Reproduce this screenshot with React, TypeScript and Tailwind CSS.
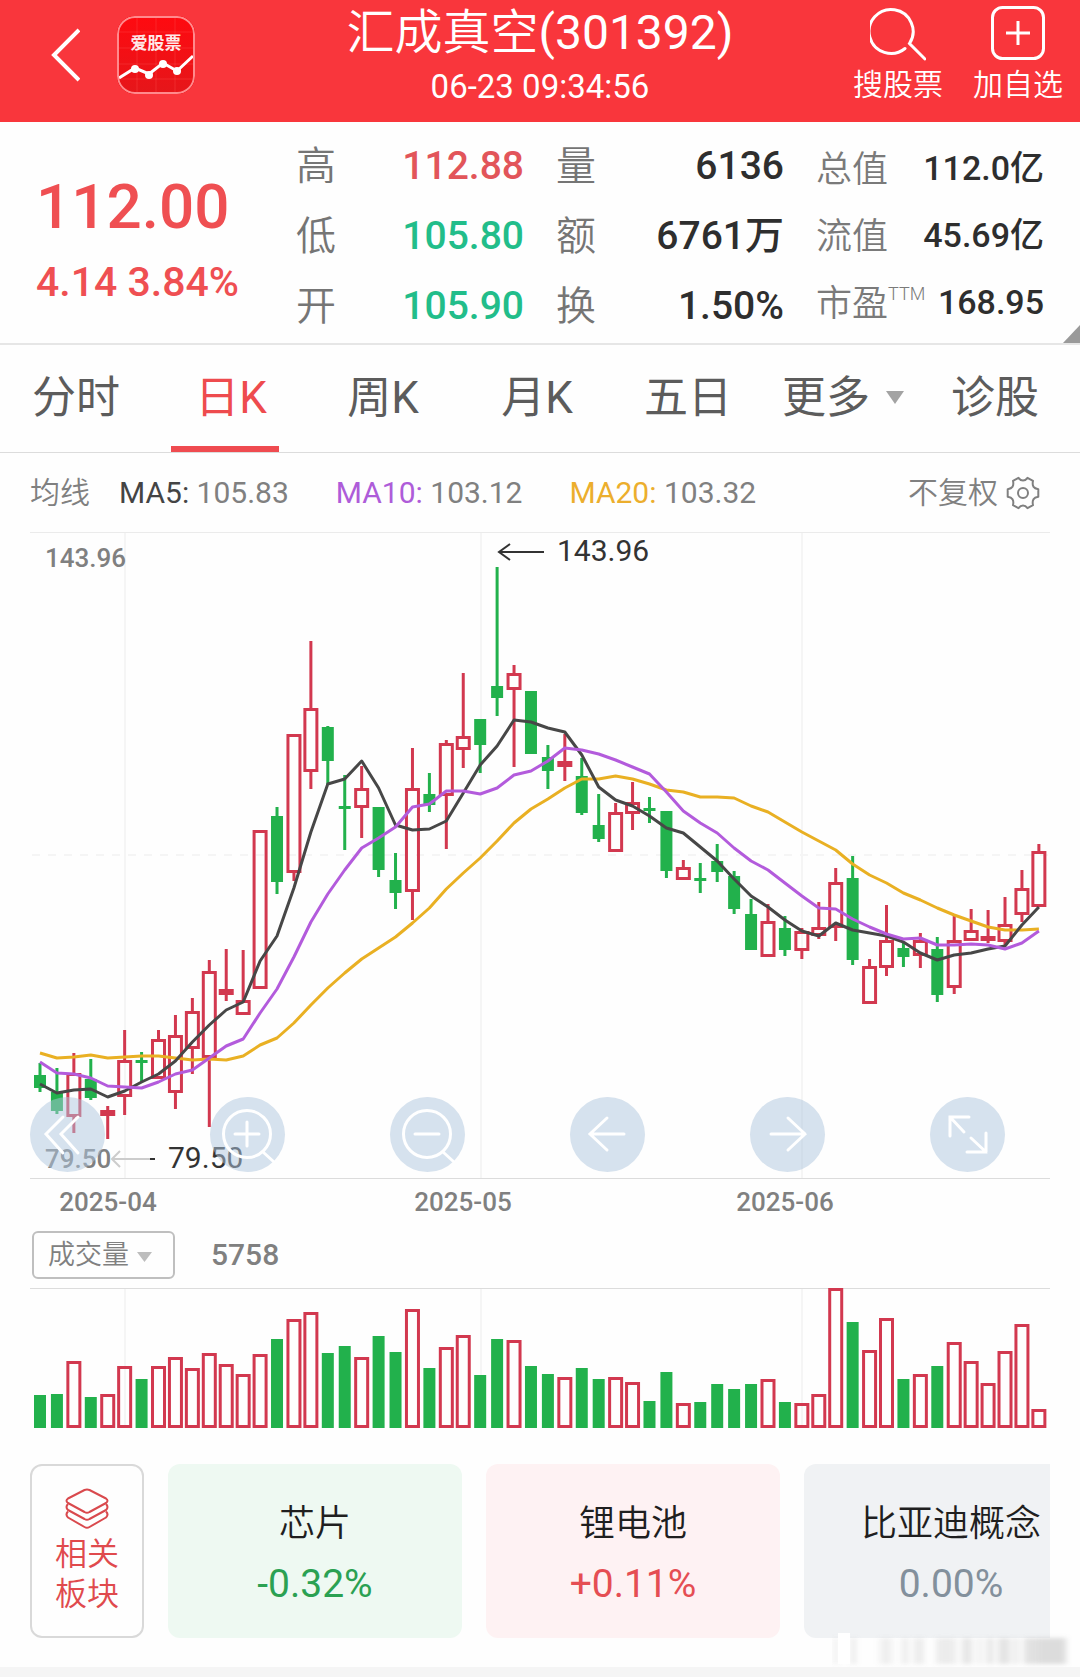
import React, { useState } from "react";

type Candle = {
  up: boolean;
  high: number;
  low: number;
  top: number;
  bottom: number;
  volume: number;
};

const STEP = 16.93;
const xAt = (i: number) => 40 + STEP * i;

const rows: [string, number, number, number, number, number][] = [
  ["g", 1063, 1092, 1075, 1088, 1395],
  ["g", 1068, 1114, 1092, 1111, 1394],
  ["r", 1053, 1133, 1073, 1117, 1361],
  ["g", 1059, 1100, 1079, 1098, 1397],
  ["r", 1106, 1139, 1110, 1116, 1394],
  ["r", 1030, 1115, 1060, 1097, 1366],
  ["g", 1052, 1081, 1060, 1063, 1379],
  ["r", 1030, 1079, 1039, 1079, 1366],
  ["r", 1015, 1109, 1035, 1093, 1357],
  ["r", 998, 1074, 1011, 1049, 1368],
  ["r", 960, 1127, 971, 1058, 1353],
  ["r", 949, 1001, 989, 995, 1364],
  ["r", 950, 1015, 1000, 1015, 1374],
  ["r", 830, 989, 830, 989, 1354],
  ["g", 807, 894, 816, 882, 1339],
  ["r", 734, 881, 734, 873, 1319],
  ["r", 641, 789, 708, 772, 1312],
  ["g", 726, 785, 727, 761, 1353],
  ["g", 775, 850, 806, 809, 1346],
  ["r", 766, 838, 788, 808, 1357],
  ["g", 807, 877, 807, 870, 1336],
  ["g", 853, 909, 880, 893, 1352],
  ["r", 748, 920, 788, 892, 1309],
  ["g", 773, 812, 794, 805, 1368],
  ["r", 740, 849, 743, 796, 1347],
  ["r", 673, 768, 736, 750, 1335],
  ["g", 719, 773, 719, 745, 1375],
  ["g", 567, 716, 686, 698, 1339],
  ["r", 665, 767, 673, 690, 1340],
  ["g", 691, 754, 691, 754, 1366],
  ["g", 745, 789, 757, 771, 1374],
  ["r", 734, 781, 761, 767, 1377],
  ["g", 758, 815, 776, 813, 1368],
  ["g", 794, 842, 825, 839, 1379],
  ["r", 803, 852, 812, 852, 1377],
  ["r", 782, 830, 802, 814, 1382],
  ["g", 797, 823, 808, 811, 1401],
  ["g", 811, 878, 811, 871, 1372],
  ["r", 860, 880, 867, 880, 1403],
  ["g", 863, 893, 878, 881, 1402],
  ["g", 844, 882, 861, 872, 1384],
  ["g", 871, 914, 876, 909, 1389],
  ["g", 899, 950, 914, 950, 1384],
  ["r", 904, 957, 921, 957, 1379],
  ["g", 916, 956, 928, 950, 1402],
  ["r", 928, 959, 931, 951, 1403],
  ["r", 902, 939, 927, 936, 1394],
  ["r", 868, 941, 882, 928, 1288],
  ["g", 856, 965, 878, 960, 1322],
  ["r", 959, 1004, 966, 1004, 1350],
  ["r", 905, 976, 940, 968, 1318],
  ["g", 943, 967, 948, 957, 1379],
  ["r", 933, 968, 940, 956, 1374],
  ["g", 937, 1002, 949, 995, 1366],
  ["r", 914, 994, 940, 988, 1342],
  ["r", 909, 941, 930, 941, 1361],
  ["r", 910, 943, 936, 941, 1383],
  ["r", 897, 945, 924, 942, 1351],
  ["r", 870, 922, 888, 915, 1324],
  ["r", 844, 907, 851, 907, 1409],
];

const candles: Candle[] = rows.map(([c, high, low, top, bottom, volume]) => ({
  up: c === "r",
  high,
  low,
  top,
  bottom,
  volume,
}));

const ma5 = [
  1084, 1093, 1090, 1089, 1097, 1091, 1082, 1074, 1061, 1042, 1025, 1010, 1002, 961, 936, 888, 832, 784, 779, 761,
  788, 825, 830, 829, 821, 793, 765, 746, 720, 722, 728, 732, 755, 787, 800, 806, 816, 828, 833, 847, 861, 879, 896,
  907, 920, 931, 936, 923, 930, 933, 936, 942, 953, 960, 955, 953, 949, 946, 925, 907,
];
const ma10 = [
  1062, 1073, 1074, 1078, 1086, 1087, 1088, 1082, 1074, 1070, 1058, 1046, 1039, 1013, 989, 957, 922, 894, 870, 848,
  838, 827, 807, 804, 791, 791, 794, 788, 775, 771, 761, 748, 750, 754, 760, 767, 774, 792, 811, 823, 833, 848, 861,
  870, 883, 896, 908, 909, 919, 927, 934, 939, 938, 945, 945, 944, 945, 949, 943, 931,
];
const ma20 = [
  1053, 1058, 1057, 1055, 1058, 1057, 1056, 1056, 1058, 1060, 1059, 1060, 1056, 1045, 1038, 1023, 1005, 988, 973, 959,
  948, 937, 923, 908, 889, 873, 858, 841, 823, 809, 799, 788, 779, 779, 776, 779, 784, 790, 792, 797, 797, 798, 806,
  812, 822, 832, 841, 850, 864, 875, 883, 893, 900, 908, 915, 921, 927, 930, 930, 929,
];

const toPoints = (values: number[]) => values.map((v, i) => `${xAt(i).toFixed(1)},${v}`).join(" ");

const RED = "#d2384f";
const GREEN = "#22b14c";
const GRID_X = [125, 481, 802];

function CandleShape({ c, i }: { c: Candle; i: number }) {
  const x = xAt(i);
  if (!c.up) {
    return (
      <g fill={GREEN}>
        <rect x={x - 1.5} y={c.high} width={3} height={c.low - c.high} />
        <rect x={x - 6} y={c.top} width={12} height={c.bottom - c.top} />
      </g>
    );
  }
  const h = c.bottom - c.top;
  return (
    <g fill={RED}>
      {c.high < c.top && <rect x={x - 1.5} y={c.high} width={3} height={c.top - c.high} />}
      {c.low > c.bottom && <rect x={x - 1.5} y={c.bottom} width={3} height={c.low - c.bottom} />}
      {h <= 6 ? (
        <rect x={x - 7.5} y={c.top} width={15} height={h} />
      ) : (
        <rect x={x - 6} y={c.top + 1.5} width={12} height={h - 3} fill="none" stroke={RED} strokeWidth={3} />
      )}
    </g>
  );
}

function PriceChart() {
  return (
    <svg viewBox="30 532 1020 688" className="block w-full" role="img" aria-label="日K线图">
      <g stroke="#f5f5f5" strokeWidth={2}>
        {GRID_X.map((x) => (
          <line key={x} x1={x} x2={x} y1={532} y2={1178} />
        ))}
        <line x1={32} x2={1050} y1={855} y2={855} strokeDasharray="8 8" />
      </g>
      <line x1={30} x2={1050} y1={532} y2={532} stroke="#ebebeb" strokeWidth={2} />
      <line x1={30} x2={1050} y1={1178.5} y2={1178.5} stroke="#dcdcdc" />
      {candles.map((c, i) => (
        <CandleShape key={i} c={c} i={i} />
      ))}
      <g fill="none" strokeWidth={3} strokeLinejoin="round">
        <polyline points={toPoints(ma20)} stroke="#e9b023" />
        <polyline points={toPoints(ma5)} stroke="#474747" />
        <polyline points={toPoints(ma10)} stroke="#b35bdc" />
      </g>
      <g fontSize={26} fontWeight={500} fill="#808080">
        <text x={45} y={567}>143.96</text>
        <text x={45} y={1168}>79.50</text>
        <g textAnchor="middle">
          <text x={108} y={1211}>2025-04</text>
          <text x={463} y={1211}>2025-05</text>
          <text x={785} y={1211}>2025-06</text>
        </g>
      </g>
      <g fontSize={30} fill="#333333">
        <text x={557} y={561}>143.96</text>
        <text x={168} y={1168}>79.50</text>
      </g>
      <path d="M544 552H499M510 544L499 552L510 560" fill="none" stroke="#333333" strokeWidth={2} />
      <path d="M150 1159H112M120 1151L112 1159L120 1167" fill="none" stroke="#cccccc" strokeWidth={2} />
      <path d="M150 1159H155" stroke="#333333" strokeWidth={2} />
    </svg>
  );
}

function VolumeChart() {
  return (
    <svg viewBox="30 1288 1020 140" className="block w-full" role="img" aria-label="成交量">
      {GRID_X.map((x) => (
        <line key={x} x1={x} x2={x} y1={1289} y2={1426} stroke="#f5f5f5" strokeWidth={2} />
      ))}
      <line x1={30} x2={1050} y1={1288.5} y2={1288.5} stroke="#dcdcdc" />
      {candles.map((c, i) =>
        c.up ? (
          <rect
            key={i}
            x={xAt(i) - 6}
            y={c.volume + 1.5}
            width={12}
            height={1425 - c.volume}
            fill="none"
            stroke={RED}
            strokeWidth={3}
          />
        ) : (
          <rect key={i} x={xAt(i) - 6} y={c.volume} width={12} height={1428 - c.volume} fill={GREEN} />
        )
      )}
    </svg>
  );
}

const tools: { label: string; d: string; circle?: boolean }[] = [
  { label: "最早", d: "M33 20L16 37L33 56M48 20L31 37L48 56" },
  { label: "放大", d: "M25 37H49M37 25V49M53 55L64 65", circle: true },
  { label: "缩小", d: "M25 37H49M53 55L64 65", circle: true },
  { label: "左移", d: "M54 37H20M37 21L20 37L37 53" },
  { label: "右移", d: "M21 37H55M38 21L55 37L38 53" },
  { label: "全屏", d: "M20 39V20H39M20 20L34 35M56 36V55H37M56 55L41 41" },
];

function ChartTools() {
  return (
    <div className="absolute inset-x-0 bottom-12 flex justify-between pr-[45px]">
      {tools.map((t) => (
        <button key={t.label} type="button" aria-label={t.label} className="size-[75px] rounded-full bg-[#adc6dd]/50">
          <svg viewBox="0 0 75 75" className="size-full" fill="none" stroke="#ffffff" strokeWidth={3} strokeLinecap="round">
            {t.circle && <circle cx={37} cy={37} r={23.5} />}
            <path d={t.d} />
          </svg>
        </button>
      ))}
    </div>
  );
}

function Header() {
  return (
    <header className="grid h-[122px] grid-cols-[1fr_auto_1fr] bg-[#f9363c] text-white">
      <div className="flex items-start gap-[37px] pt-4 pl-[50px]">
        <button type="button" aria-label="返回" className="flex h-[78px] w-[30px] items-center">
          <svg viewBox="0 0 30 56" className="h-14 w-[30px]" fill="none" stroke="#ffffff" strokeWidth={4}>
            <path d="M29 3L4 28L29 53" />
          </svg>
        </button>
        <a href="#home" aria-label="爱股票" className="relative block size-[78px] overflow-hidden rounded-[18px] bg-[#f0090f]">
          <svg viewBox="0 0 78 78" className="size-full" fill="none">
            <defs>
              <linearGradient id="logo" x1="0" x2="0" y1="0" y2="1">
                <stop offset="0" stopColor="#ff0a10" />
                <stop offset="1" stopColor="#e5161a" />
              </linearGradient>
            </defs>
            <rect width={78} height={78} fill="url(#logo)" />
            <path d="M20 0V78M39 0V78M58 0V78M0 16H78M0 32H78M0 48H78M0 63H78" stroke="#ff5054" strokeOpacity={0.35} />
            <path d="M2 62L18 52L32 58L46 47L60 55L76 40" stroke="#ffffff" strokeWidth={3} />
            <g fill="#ffffff">
              <circle cx={18} cy={53} r={4} />
              <circle cx={32} cy={59} r={4} />
              <circle cx={46} cy={48} r={4} />
              <circle cx={60} cy={55} r={4} />
            </g>
            <rect x={1} y={1} width={76} height={76} rx={17} stroke="#ff8a8d" strokeWidth={2} />
            <text x={39} y={33} textAnchor="middle" fontSize={17} fontWeight={700} fill="#ffe9e9">
              爱股票
            </text>
          </svg>
        </a>
      </div>
      <div className="flex flex-col items-center">
        <h1 className="text-[48px] leading-[66px] font-normal">
          <span className="font-[350]">汇成真空</span>(301392)
        </h1>
        <time className="text-[33px] leading-[42px]">06-23 09:34:56</time>
      </div>
      <div className="flex items-start justify-end gap-[30px] pr-[17px] text-[30px] leading-9 font-[350]">
        <button type="button" className="flex flex-col items-center gap-1.5 pt-[5px]">
          <svg viewBox="0 0 56 56" className="size-14" fill="none" stroke="#ffffff" strokeWidth={3} strokeLinecap="round">
            <path d="M35 43.500A22 22 0 1 1 39.500 38.500L55 54" />
          </svg>
          <span>搜股票</span>
        </button>
        <button type="button" className="flex flex-col items-center gap-1.5 pt-[5px]">
          <svg viewBox="0 0 56 56" className="size-14" fill="none" stroke="#ffffff" strokeWidth={3}>
            <rect x={2.5} y={2.5} width={51} height={51} rx={10} />
            <path d="M16 28H40M28 16V40" />
          </svg>
          <span>加自选</span>
        </button>
      </div>
    </header>
  );
}

function Stat({ label, value, tone, small }: { label: React.ReactNode; value: string; tone?: string; small?: boolean }) {
  return (
    <div className={small ? "flex h-[67px] items-center justify-between" : "flex h-[70px] items-center justify-between"}>
      <dt className={small ? "pt-1 text-[36px] font-[350] text-[#7a7a7a]" : "pt-0.5 text-[40px] font-[350] text-[#757575]"}>{label}</dt>
      <dd className={`${small ? "text-[34px]" : "text-[39px]"} font-medium whitespace-nowrap ${tone ?? "text-[#2e2e2e]"}`}>{value}</dd>
    </div>
  );
}

function Quote() {
  return (
    <section className="relative grid grid-cols-4 gap-x-8 border-b-2 border-[#e6e6e6] px-9 pt-[9px] pb-0.5 leading-none">
      <div className="flex flex-col gap-4 pt-[45px] font-medium whitespace-nowrap text-[#ef4f52]">
        <div className="text-[62px] leading-[62px]">112.00</div>
        <div className="text-[41px] leading-[56px]">4.14 3.84%</div>
      </div>
      <dl>
        <Stat label="高" value="112.88" tone="text-[#e2555a]" />
        <Stat label="低" value="105.80" tone="text-[#22bd8a]" />
        <Stat label="开" value="105.90" tone="text-[#22bd8a]" />
      </dl>
      <dl>
        <Stat label="量" value="6136" />
        <Stat label="额" value="6761万" />
        <Stat label="换" value="1.50%" />
      </dl>
      <dl className="pt-[3px]">
        <Stat small label="总值" value="112.0亿" />
        <Stat small label="流值" value="45.69亿" />
        <Stat
          small
          label={
            <span className="flex items-start">
              市盈<span className="text-[18px] leading-4">TTM</span>
            </span>
          }
          value="168.95"
        />
      </dl>
      <svg viewBox="0 0 17 18" className="absolute right-0 bottom-0 h-[18px] w-[17px]" fill="#9a9a9a">
        <path d="M17 0V18H0Z" />
      </svg>
    </section>
  );
}

const tabs = ["分时", "日K", "周K", "月K", "五日", "更多", "诊股"];

function Tabs() {
  const [active, setActive] = useState("日K");
  return (
    <nav className="grid h-[108px] grid-cols-[152fr_146fr_170fr_138fr_164fr_146fr_158fr_6fr] border-b border-[#dcdcdc] text-[44px] text-[#5c5c5c]">
      {tabs.map((t) => (
        <button
          key={t}
          type="button"
          onClick={() => setActive(t)}
          aria-pressed={active === t}
          className={`relative flex items-center justify-center pb-0.5 whitespace-nowrap ${active === t ? "pl-3 text-[#ee4b4e]" : ""}`}
        >
          {t}
          {t === "更多" && (
            <svg viewBox="0 0 18 13" className="ml-4 h-[13px] w-[18px]" fill="#a3a3a3">
              <path d="M0 0H18L9 13Z" />
            </svg>
          )}
          {active === t && <span className="absolute inset-x-[19px] bottom-0 h-1.5 bg-[#ef4b50]" />}
        </button>
      ))}
    </nav>
  );
}

function Averages() {
  return (
    <div className="flex h-[79px] items-center px-[30px] text-[30px] whitespace-nowrap text-[#808080]">
      <span className="font-[350]">均线</span>
      <span className="ml-[29px]"><span className="text-[#444444]">MA5:</span> 105.83</span>
      <span className="ml-[47px]"><span className="text-[#ae5cd9]">MA10:</span> 103.12</span>
      <span className="ml-[47px]"><span className="text-[#ecae2d]">MA20:</span> 103.32</span>
      <button type="button" className="ml-auto flex items-center gap-2 pr-[10px] font-[350]">
        不复权
        <svg viewBox="0 0 34 34" className="size-[34px]" fill="none" stroke="#808080" strokeWidth={2} strokeLinejoin="round">
          <path d="M12.5 1.8Q14.5 4.6 17 4.6T21.5 1.8L27 4.8Q26.2 8.6 27.4 10.6Q28.7 12.6 32.3 13.2V20.8Q28.7 21.4 27.4 23.4Q26.2 25.4 27 29.2L21.5 32.2Q19.5 29.4 17 29.4T12.5 32.2L7 29.2Q7.8 25.4 6.6 23.4Q5.3 21.4 1.7 20.8V13.2Q5.3 12.6 6.6 10.6Q7.8 8.6 7 4.8Z" />
          <circle cx={17} cy={17} r={5} />
        </svg>
      </button>
    </div>
  );
}

const sectors = [
  { name: "芯片", change: "-0.32%", box: "bg-[#eef9f2]", text: "text-[#2ba152]" },
  { name: "锂电池", change: "+0.11%", box: "bg-[#fef2f3]", text: "text-[#e54e53]" },
  { name: "比亚迪概念", change: "0.00%", box: "bg-[#f0f2f4]", text: "text-[#83909c]" },
];

function Sectors() {
  return (
    <section className="mx-[30px] mt-9 flex gap-6 overflow-hidden">
      <button
        type="button"
        className="flex h-[174px] w-[114px] shrink-0 flex-col items-center rounded-[12px] border-2 border-[#d9d9d9] pt-[22px] text-[32px] leading-10 font-[350] text-[#e04a4d]"
      >
        <svg viewBox="0 0 44 42" className="mb-1 h-[42px] w-11" fill="none" stroke="#d9494d" strokeWidth={2} strokeLinejoin="round">
          <path d="M19.500 2Q22 1 24.500 2L41 10.500Q44 12.500 41 15L24.500 24Q22 25.500 19.500 24L3 15Q0 12.500 3 10.500Z" />
          <path d="M3 16Q0 19 3 22L19.500 31Q22 32.500 24.500 31L41 22Q44 19 41 16" />
          <path d="M3 23.500Q0 26.500 3 29.500L19.500 39Q22 40.500 24.500 39L41 29.500Q44 26.500 41 23.500" />
        </svg>
        <span>相关</span>
        <span>板块</span>
      </button>
      {sectors.map((s) => (
        <a
          key={s.name}
          href="#sector"
          className={`flex h-[174px] w-[294px] shrink-0 flex-col items-center justify-center gap-2 rounded-[12px] pt-[5px] ${s.box}`}
        >
          <span className="text-[36px] leading-[52px] font-[350] text-[#1f1f1f]">{s.name}</span>
          <span className={`text-[39px] leading-[52px] ${s.text}`}>{s.change}</span>
        </a>
      ))}
    </section>
  );
}

function Haze() {
  const bars: [number, number, number][] = [
    [3, 2, 0.3], [20, 3, 0.3], [48, 12, 0.14], [70, 6, 0.18], [82, 10, 0.16], [104, 20, 0.16], [130, 10, 0.22],
    [146, 4, 0.18], [156, 4, 0.34], [166, 12, 0.24], [182, 4, 0.24], [192, 14, 0.26], [206, 28, 0.3],
  ];
  return (
    <svg viewBox="0 0 240 36" className="absolute right-2 bottom-[10px] h-9 w-60" aria-hidden="true">
      <defs>
        <filter id="soft" x="-5%" y="-20%" width="110%" height="140%">
          <feGaussianBlur stdDeviation="3 2" />
        </filter>
      </defs>
      <g filter="url(#soft)" fill="#8f8f8f">
        {bars.map(([x, w, o]) => (
          <rect key={x} x={x} y={7} width={w} height={26} fillOpacity={o} />
        ))}
      </g>
      <rect x={6} y={2} width={12} height={31} fill="#ffffff" />
    </svg>
  );
}

export default function App() {
  return (
    <div
      lang="zh-CN"
      className="relative w-full overflow-hidden bg-[#fefefe] font-['Roboto','Noto_Sans_CJK_SC',sans-serif]"
    >
      <Header />
      <Quote />
      <Tabs />
      <Averages />
      <div className="relative mx-[30px]">
        <PriceChart />
        <ChartTools />
      </div>
      <div className="mx-8 mt-[11px] flex h-12 items-center gap-9 text-[#808080]">
        <div className="relative">
          <select
            aria-label="副图指标"
            className="block h-12 w-[143px] appearance-none rounded-[6px] border-2 border-[#bfbfbf] bg-transparent pl-[14px] text-[27px] leading-10 font-[350]"
          >
            <option>成交量</option>
          </select>
          <svg viewBox="0 0 15 10" className="pointer-events-none absolute top-[21px] right-[23px] h-2.5 w-[15px]" fill="#bdbdbd">
            <path d="M0 0H15L7.500 10Z" />
          </svg>
        </div>
        <span className="text-[30px] leading-9 font-medium">5758</span>
      </div>
      <div className="mx-[30px] mt-[9px]">
        <VolumeChart />
      </div>
      <Sectors />
      <div className="mt-[29px] h-[10px] bg-[#f5f5f5]" />
      <Haze />
    </div>
  );
}
